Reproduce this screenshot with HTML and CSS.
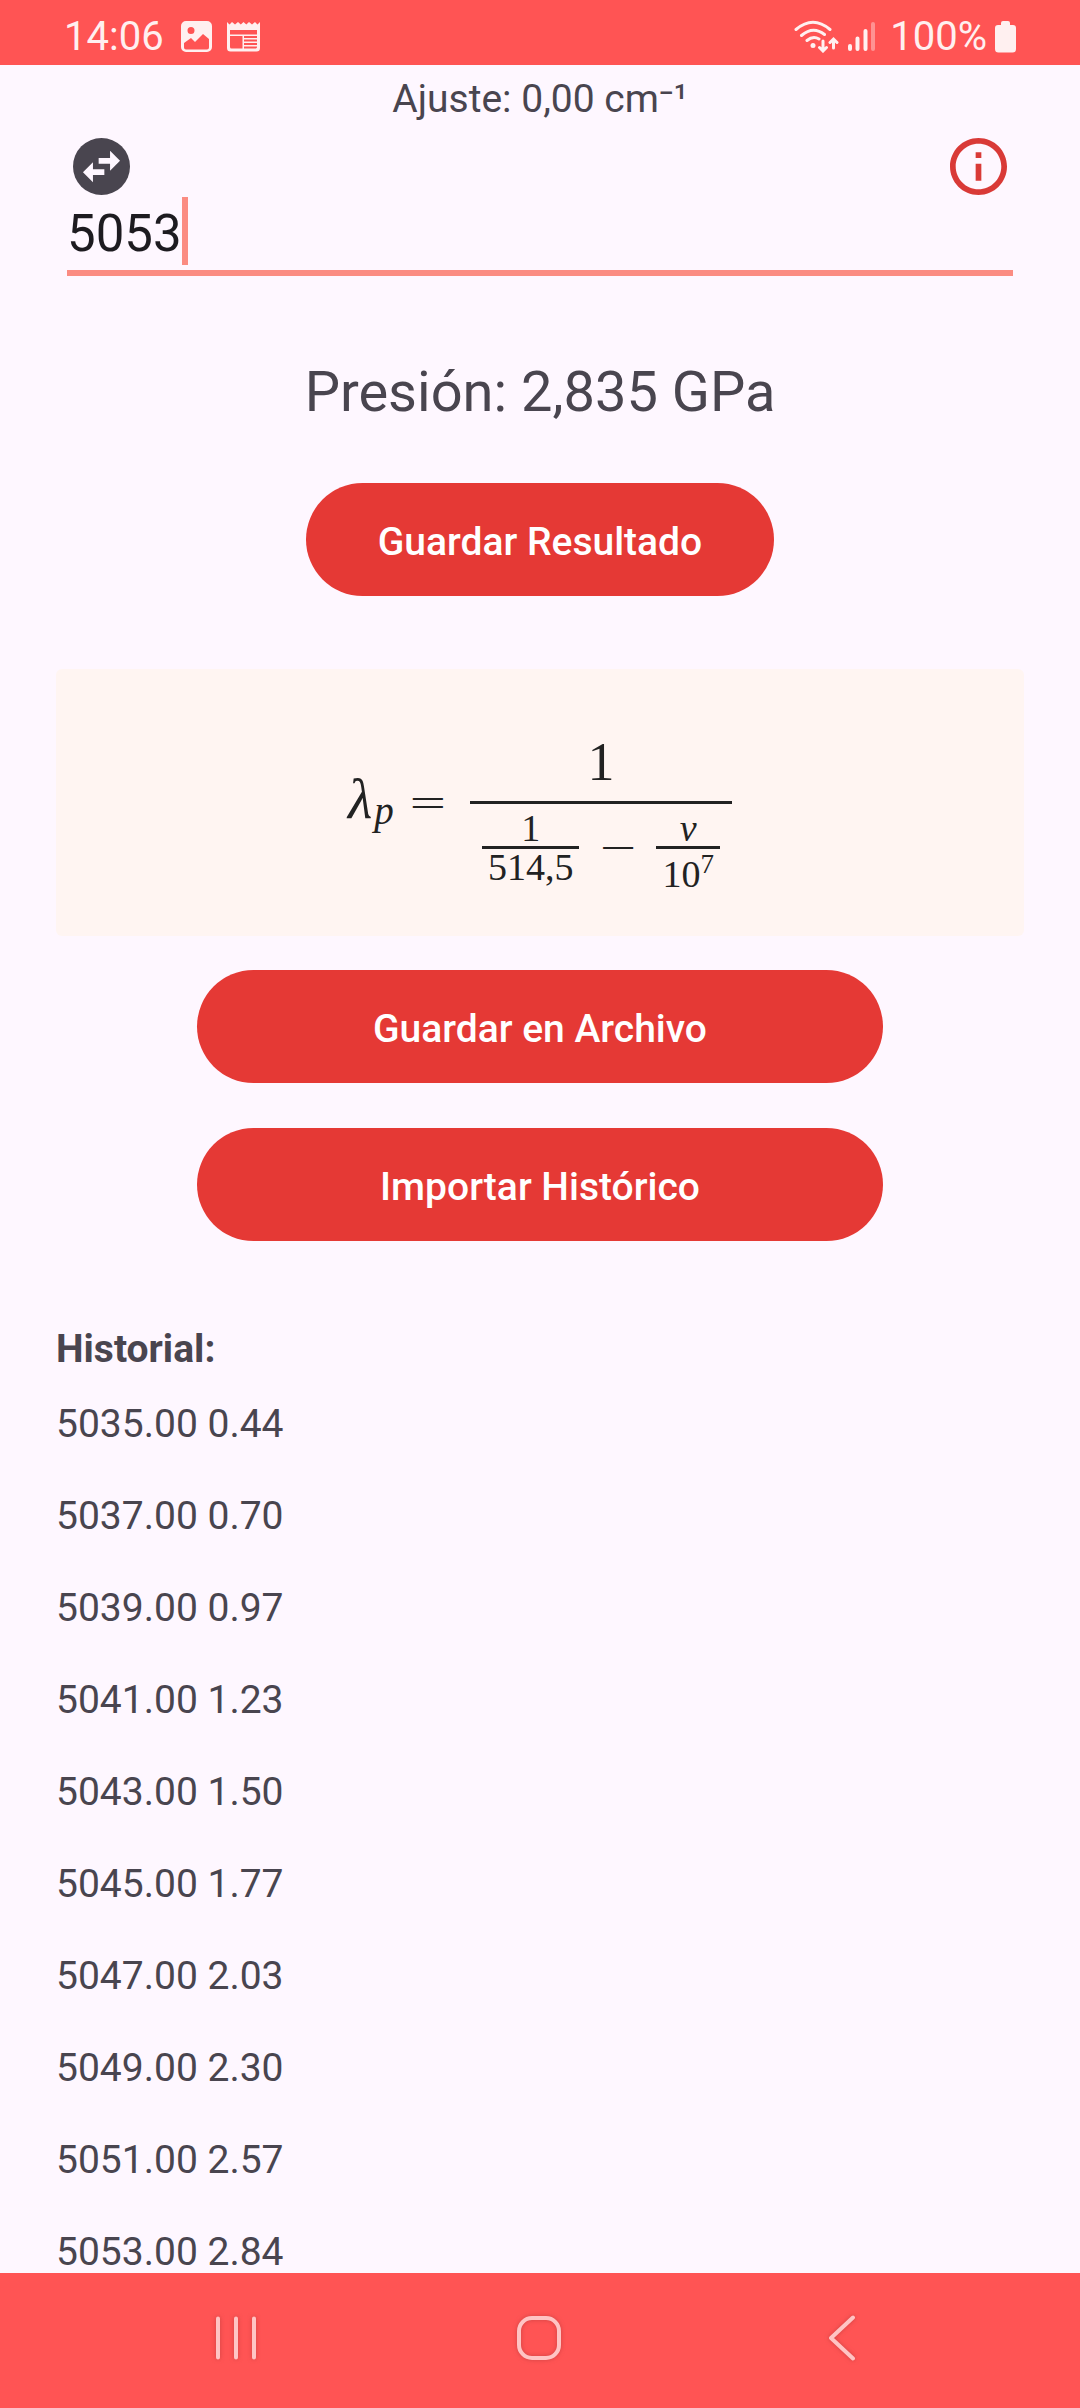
FILE: index.html
```html
<!DOCTYPE html>
<html lang="es">
<head>
<meta charset="utf-8">
<meta name="viewport" content="width=device-width, initial-scale=1">
<title>Calculadora de presión</title>
<link rel="stylesheet" href="styles.css">
</head>
<body>
<header class="status-bar">
  <span class="status-text">14:06</span>
  <svg class="status-photo" width="31" height="31" viewBox="0 0 31 31" aria-hidden="true">
    <path fill="currentColor" fill-rule="evenodd" d="M5 0h21a5 5 0 0 1 5 5v21a5 5 0 0 1-5 5H5a5 5 0 0 1-5-5V5a5 5 0 0 1 5-5zM10 6a3.500 3.500 0 1 0 0 7a3.500 3.500 0 1 0 0-7zM3 22v4.500a2 2 0 0 0 2 2h21a2 2 0 0 0 2-2v-8.500l-6-5l-8 8l-4-4z"/>
  </svg>
  <svg class="status-news" width="33" height="31" viewBox="0 0 33 31" aria-hidden="true">
    <path fill="currentColor" fill-rule="evenodd" d="M0 1l2.500 2.500L5 1l3 2.500L11 1l2.800 2.500L16.500 1l2.800 2.500L22 1l3 2.500L28 1l2.500 2.500L33 1v26a3.500 3.500 0 0 1-3.500 3.500h-26A3.500 3.500 0 0 1 0 27zM3 9v4.500h27V9zM3 15v11a1.500 1.500 0 0 0 1.500 1.500H15.500V15zM17 15v2h13v-2zM17 18.500v2h13v-2zM17 22v2h13v-2zM17 25.500v2h12l1-1v-1z"/>
  </svg>
  <svg class="status-wifi" width="45" height="33" viewBox="0 0 45 33" fill="none" stroke="currentColor" stroke-width="3" stroke-linecap="round" aria-hidden="true">
    <path d="M2 9.500Q19 -5 36 9.500M7.500 15.500Q19 5.500 30.500 14.500M13 20.500Q19 15.500 25 19"/>
    <circle cx="19" cy="25.500" r="2.500" fill="currentColor" stroke="none"/>
    <path d="M29 21v9M25.500 27.500l3.500 3.500l3.500-3.500M39.500 28v-8.500M36 22.500l3.500-3.500l3.500 3.500"/>
  </svg>
  <svg class="status-signal" width="28" height="30" viewBox="0 0 28 30" fill="none" stroke="currentColor" stroke-width="4" stroke-linecap="round" aria-hidden="true">
    <path d="M2 24v3M9.500 16.500v10.500M17.500 9v18"/><path opacity=".4" d="M25 2v25"/>
  </svg>
  <span class="status-text">100%</span>
  <svg class="status-battery" width="21" height="32" viewBox="0 0 21 32" fill="currentColor" aria-hidden="true">
    <path d="M6 2a2 2 0 0 1 2-2h5a2 2 0 0 1 2 2v2h3a3 3 0 0 1 3 3v21a3.500 3.500 0 0 1-3.500 3.500h-14A3.500 3.500 0 0 1 0 28V7a3 3 0 0 1 3-3h3z"/>
  </svg>
</header>

<main class="content">
  <p class="adjust">Ajuste: 0,00 cm⁻¹</p>
  <div class="tools">
    <button class="icon-button" type="button" aria-label="Cambiar unidades">
      <svg viewBox="2 2 20 20" aria-hidden="true"><circle cx="12" cy="12" r="10" fill="#49454f"/><path fill="#fef7ff" d="M15 6.500l3.500 3.500l-3.500 3.500V11h-4V9h4zM9 17.500L5.500 14L9 10.500V13h4v2H9z"/></svg>
    </button>
    <button class="icon-button" type="button" aria-label="Información">
      <svg viewBox="2 2 20 20" aria-hidden="true"><path fill="#d93a37" d="M11 7h2v2h-2zm0 4h2v6h-2zm1-9C6.480 2 2 6.480 2 12s4.480 10 10 10 10-4.480 10-10S17.520 2 12 2zm0 18c-4.410 0-8-3.590-8-8s3.590-8 8-8 8 3.590 8 8-3.590 8-8 8z"/></svg>
    </button>
  </div>
  <div class="field">
    <input class="field-input" type="text" inputmode="decimal" value="5053" aria-label="Medida">
    <span class="field-cursor"></span>
  </div>
  <p class="pressure">Presión: 2,835 GPa</p>
  <button class="button" type="button">Guardar Resultado</button>

  <div class="formula-card">
    <div class="formula">
      <span class="symbol">λ</span><span class="subscript">p</span>
      <span class="operator">=</span>
      <div class="fraction">
        <span class="numerator">1</span>
        <div class="denominator">
          <div class="small-fraction">
            <span class="small-top">1</span>
            <span class="small-bottom">514,5</span>
          </div>
          <span class="operator">−</span>
          <div class="small-fraction">
            <span class="small-top small-italic">ν</span>
            <span class="small-bottom power">10<span class="exponent">7</span></span>
          </div>
        </div>
      </div>
    </div>
  </div>

  <div class="actions">
    <button class="button" type="button">Guardar en Archivo</button>
    <button class="button" type="button">Importar Histórico</button>
  </div>

  <h2 class="history-title">Historial:</h2>
  <ul class="history">
    <li>5035.00 0.44</li>
    <li>5037.00 0.70</li>
    <li>5039.00 0.97</li>
    <li>5041.00 1.23</li>
    <li>5043.00 1.50</li>
    <li>5045.00 1.77</li>
    <li>5047.00 2.03</li>
    <li>5049.00 2.30</li>
    <li>5051.00 2.57</li>
    <li>5053.00 2.84</li>
  </ul>
</main>

<nav class="nav-bar">
  <button class="nav-button" type="button" aria-label="Recientes">
    <svg width="48" height="48" viewBox="0 0 48 48" aria-hidden="true"><path d="M6 4.500v39M24 4.500v39M42 4.500v39"/></svg>
  </button>
  <button class="nav-button" type="button" aria-label="Inicio">
    <svg width="48" height="48" viewBox="0 0 48 48" aria-hidden="true"><rect x="4" y="4" width="40" height="40" rx="13"/></svg>
  </button>
  <button class="nav-button" type="button" aria-label="Atrás">
    <svg width="48" height="48" viewBox="0 0 48 48" aria-hidden="true"><path d="M35 3.500L13 24l22 20.500"/></svg>
  </button>
</nav>
</body>
</html>
```
FILE: styles.css
```css
* {
  box-sizing: border-box;
}

body {
  margin: 0;
  height: 100vh;
  display: flex;
  flex-direction: column;
  background: #fef7ff;
  color: #49454f;
  font-family: Roboto, sans-serif;
  font-size: 39px;
  line-height: 46px;
}

button {
  border: 0;
  font: inherit;
  cursor: pointer;
}

p,
h2,
ul {
  margin: 0;
  padding: 0;
}

/* System status bar */
.status-bar {
  flex: none;
  display: flex;
  align-items: center;
  height: 65px;
  padding: 8px 64px 0;
  background: #ff5454;
  color: #fff0f0;
}

.status-text {
  font-size: 40px;
}

.status-photo {
  margin-left: 17px;
}

.status-news {
  margin-left: 15px;
}

.status-wifi {
  margin-left: auto;
}

.status-signal {
  margin: 0 14px 0 9px;
}

.status-battery {
  margin-left: 8px;
}

/* Main screen */
.content {
  flex: 1;
  min-height: 0;
  display: flex;
  flex-direction: column;
  align-items: center;
  padding: 11px 56px 0;
}

.content > * {
  flex: none;
}

.tools {
  align-self: stretch;
  display: flex;
  justify-content: space-between;
  margin-top: 16px;
  padding: 0 17px;
}

.icon-button {
  width: 57px;
  height: 57px;
  padding: 0;
  background: none;
}

.icon-button svg {
  display: block;
}

.field {
  position: relative;
  align-self: stretch;
  margin: 2px 11px 0;
  border-bottom: 6px solid #fb8c82;
}

.field-input {
  display: block;
  width: 100%;
  height: 73px;
  padding: 0;
  border: 0;
  outline: 0;
  background: none;
  color: #1d1b20;
  font: inherit;
  font-size: 51px;
}

.field-cursor {
  position: absolute;
  left: 115px;
  top: 0;
  width: 6px;
  height: 68px;
  background: #fb8c82;
}

.pressure {
  margin-top: 83px;
  font-size: 56px;
  line-height: 66px;
}

.button {
  height: 113px;
  padding: 4px 72px 0;
  border-radius: 57px;
  background: #e53935;
  color: #fff;
  font-weight: 500;
}

.pressure + .button {
  margin-top: 58px;
}

.formula-card {
  align-self: stretch;
  display: flex;
  justify-content: center;
  margin-top: 73px;
  padding: 62px 0 44px;
  border-radius: 6px;
  background: #fff5f2;
}

.actions {
  align-self: stretch;
  display: grid;
  gap: 45px;
  margin: 34px 141px 0;
}

.history-title {
  align-self: flex-start;
  margin-top: 85px;
  font-size: 39px;
  font-weight: 700;
}

.history {
  flex: 1;
  min-height: 0;
  align-self: stretch;
  margin-top: 6px;
  overflow-y: auto;
  scrollbar-width: none;
  list-style: none;
  line-height: 92px;
}

/* Formula */
.formula {
  display: flex;
  align-items: flex-start;
  color: #222;
  font-family: "Liberation Serif", serif;
  font-size: 54px;
  line-height: 60px;
}

.symbol {
  margin-top: 38px;
  font-size: 56px;
  font-style: italic;
}

.subscript {
  margin: 50px 14px 0 2px;
  font-size: 39px;
  font-style: italic;
}

.operator {
  font-family: "DejaVu Sans Light", "DejaVu Sans", sans-serif;
  font-size: 48px;
  font-weight: 200;
}

.formula > .operator {
  margin: 40px 22px 0 0;
}

.fraction {
  width: 262px;
}

.numerator {
  display: block;
  height: 70px;
  line-height: 62px;
  text-align: center;
}

.denominator {
  display: flex;
  justify-content: space-between;
  padding: 6px 12px 0;
  border-top: 3px solid #222;
}

.denominator .operator {
  margin-top: 6px;
}

.small-fraction {
  text-align: center;
  font-size: 38px;
  line-height: 36px;
}

.small-top {
  display: block;
}

.small-italic {
  font-style: italic;
}

.small-bottom {
  display: block;
  min-width: 62px;
  padding: 0 6px;
  border-top: 3px solid #222;
}

.power {
  display: flex;
  justify-content: center;
  padding-top: 7px;
}

.exponent {
  font-size: 27px;
  line-height: 16px;
}

/* System navigation bar */
.nav-bar {
  flex: none;
  display: grid;
  grid-template-columns: repeat(3, 1fr);
  height: 135px;
  padding: 0 87px 0 84px;
  background: #ff5454;
}

.nav-button {
  display: grid;
  place-items: center;
  padding: 0 0 6px;
  background: none;
}

.nav-button svg {
  fill: none;
  stroke: #ffc4c4;
  stroke-width: 4;
  stroke-linecap: round;
  stroke-linejoin: round;
  filter: drop-shadow(0 0 2px #a0303080);
}
```
